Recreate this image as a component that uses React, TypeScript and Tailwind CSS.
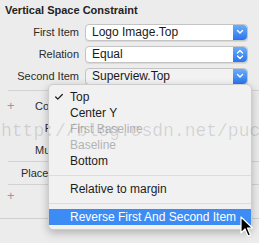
import { Check } from "lucide-react";

const Chevron = ({ double }: { double?: boolean }) => (
  <div className="flex h-full w-[14px] items-center justify-center rounded-r-[4px] bg-gradient-to-b from-[#6aaefb] to-[#2a73ee]">
    {double ? (
      <svg width="8" height="11" viewBox="0 0 8 11" fill="none" stroke="white" strokeWidth="1.4" strokeLinecap="round" strokeLinejoin="round">
        <path d="M1.5 4 L4 1.5 L6.5 4" />
        <path d="M1.5 7 L4 9.5 L6.5 7" />
      </svg>
    ) : (
      <svg width="8" height="6" viewBox="0 0 8 6" fill="none" stroke="white" strokeWidth="1.4" strokeLinecap="round" strokeLinejoin="round">
        <path d="M1.5 1.5 L4 4 L6.5 1.5" />
      </svg>
    )}
  </div>
);

function PopupRow({ label, value, double, pressed }: { label: string; value: string; double?: boolean; pressed?: boolean }) {
  return (
    <div className="flex h-[22px] items-center">
      <div className="w-[79px] text-right text-[11px] text-[#2b2b2b]">{label}</div>
      <div
        className={`ml-[6px] flex h-[17px] w-[163px] items-stretch rounded-[4px] border border-[#c4c4c4] shadow-[0_1px_0_rgba(0,0,0,0.08)] ${
          pressed ? "bg-[#f2f2f2]" : "bg-white"
        }`}
      >
        <div className="flex-1 pl-[6px] text-[12px] leading-[15px] text-[#1a1a1a]">{value}</div>
        <Chevron double={double} />
      </div>
    </div>
  );
}

function BgLabel({ text, plus }: { text: string; plus?: boolean }) {
  return (
    <div className="flex h-[22px] items-center">
      <div className="w-[14px] pl-[7px] text-[13px] font-light text-[#9a9a9a]">{plus ? "+" : ""}</div>
      <div className="w-[65px] text-right text-[11px] text-[#2b2b2b]">{text}</div>
    </div>
  );
}

const Item = ({ text, checked, disabled }: { text: string; checked?: boolean; disabled?: boolean }) => (
  <div className={`relative flex h-[16px] items-center pl-[21px] text-[12px] ${disabled ? "text-[#b4b4b4]" : "text-[#1c1c1c]"}`}>
    {checked && <Check className="absolute left-[5px] top-[3px] h-[10px] w-[10px]" strokeWidth={3} />}
    {text}
  </div>
);

const Separator = () => (
  <div className="flex h-[12px] items-center">
    <div className="h-px w-full bg-[#dcdcdc]" />
  </div>
);

export default function App() {
  return (
    <div className="relative h-[243px] w-[259px] overflow-hidden bg-[#ececec] font-['Liberation_Sans',Arial,sans-serif]">
      <div className="pl-[5px] pt-[4px] text-[11px] font-bold leading-[13px] text-[#222]">Vertical Space Constraint</div>

      <div className="mt-[4px]">
        <PopupRow label="First Item" value="Logo Image.Top" />
        <PopupRow label="Relation" value="Equal" double />
        <PopupRow label="Second Item" value="Superview.Top" pressed />
      </div>

      <div className="ml-[8px] mt-[3px] h-px bg-[#d2d2d2]" />
      <div className="-ml-[8px] pt-[4px]">
        <div className="ml-[8px]">
          <BgLabel text="Constant" plus />
        </div>
      </div>
      <BgLabel text="Priority" />
      <BgLabel text="Multiplier" />
      <div className="ml-[8px] h-px bg-[#d2d2d2]" />
      <div className="flex h-[22px] items-center">
        <div className="w-[79px] text-right text-[11px] text-[#2b2b2b]">Placeholder</div>
      </div>
      <div className="ml-[8px] h-px bg-[#d2d2d2]" />
      <div className="h-[22px] pl-[7px] text-[13px] font-light leading-[22px] text-[#9a9a9a]">+</div>
      <div className="mt-[11px] h-px bg-[#cfcfcf]" />

      {/* popup menu */}
      <div className="absolute left-[48px] top-[84px] w-[204px] overflow-hidden rounded-[5px] border border-[#cdcdcd] bg-[#f1f1f1] pb-[4px] pt-[4px] shadow-[0_3px_8px_rgba(0,0,0,0.25)]">
        <Item text="Top" checked />
        <Item text="Center Y" />
        <Item text="First Baseline" disabled />
        <Item text="Baseline" disabled />
        <Item text="Bottom" />
        <Separator />
        <Item text="Relative to margin" />
        <Separator />
        <div className="flex h-[16px] items-center bg-[#3d8cf5] pl-[21px] text-[12px] text-white">Reverse First And Second Item</div>
      </div>

      {/* watermark */}
      <div className="pointer-events-none absolute left-[1px] top-[118px] whitespace-nowrap font-['Liberation_Mono',monospace] text-[18px] text-[rgba(0,0,0,0.13)]">
        http://blog.csdn.net/puckelyq
      </div>

      {/* cursor */}
      <svg className="absolute left-[240px] top-[216px]" width="14" height="22" viewBox="0 0 14 22">
        <path d="M1 1 L1 17 L5 13 L8 20 L10.5 19 L7.5 12 L12.5 12 Z" fill="black" stroke="white" strokeWidth="1.2" strokeLinejoin="round" />
      </svg>
    </div>
  );
}
